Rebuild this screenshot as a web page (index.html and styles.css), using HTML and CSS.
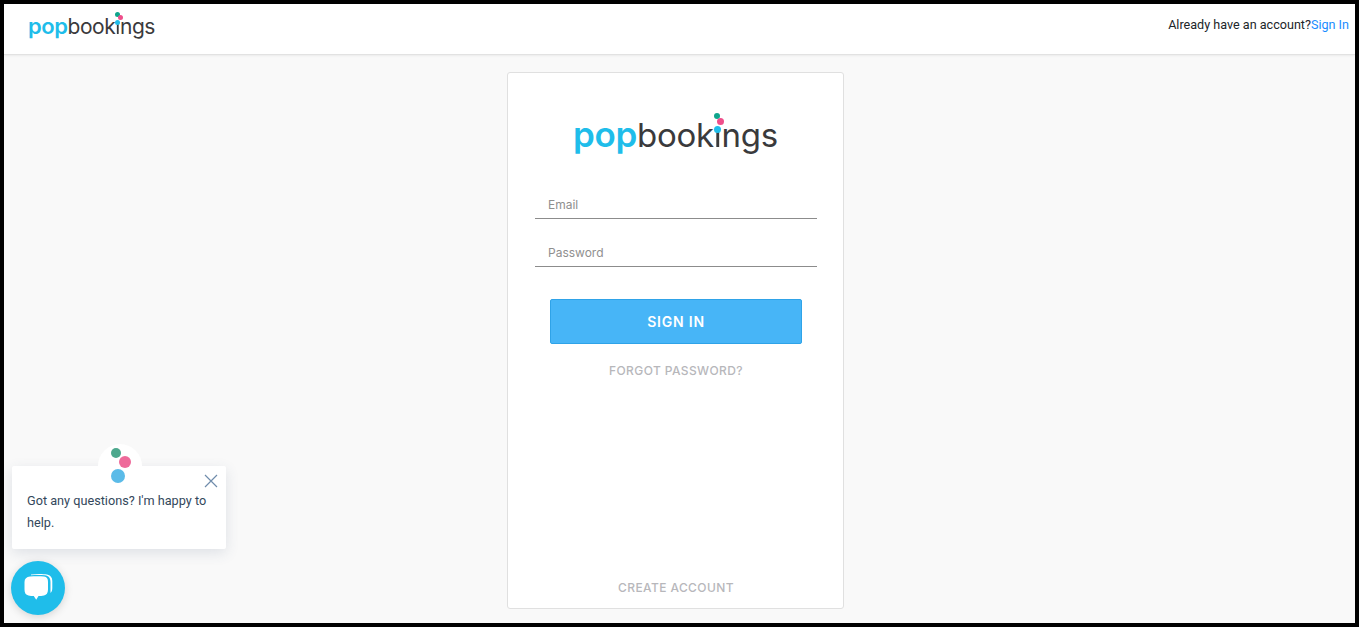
FILE: index.html
```html
<!DOCTYPE html>
<html lang="en">
<head>
  <meta charset="UTF-8" />
  <meta name="viewport" content="width=device-width, initial-scale=1.0"/>
  <title>Popbookings - Sign In</title>
  <link rel="stylesheet" href="styles.css">
</head>
<body>
  <div class="frame">
    <header class="topbar">
      <div class="logo logo-small">
        <span class="pop">pop</span>book<span class="no-dot">i</span>ngs
        <i class="dot dot-green"></i><i class="dot dot-pink"></i><i class="dot dot-blue"></i>
      </div>
      <div class="account">Already have an account?<a href="#">Sign In</a></div>
    </header>

    <main class="content">
      <div class="card">
        <div class="logo logo-large">
          <span class="pop">pop</span>book<span class="no-dot">i</span>ngs
          <i class="dot dot-green"></i><i class="dot dot-pink"></i><i class="dot dot-blue"></i>
        </div>

        <form class="form">
          <input class="field" type="text" placeholder="Email">
          <input class="field" type="password" placeholder="Password">
          <button class="submit" type="button">SIGN IN</button>
        </form>
        <a class="muted-link" href="#">FORGOT PASSWORD?</a>

        <a class="muted-link create" href="#">CREATE ACCOUNT</a>
      </div>
    </main>

    <!-- chat widget -->
    <div class="chat-bubble">
      <div class="chat-avatar">
        <i class="a-dot a-green"></i><i class="a-dot a-pink"></i><i class="a-dot a-blue"></i>
      </div>
      <svg class="chat-close" width="14" height="14" viewBox="0 0 14 14">
        <path d="M1 1 L13 13 M13 1 L1 13" stroke="#6f8cab" stroke-width="1.2" fill="none"/>
      </svg>
      <p>Got any questions? I'm happy to help.</p>
    </div>
    <div class="chat-launcher">
      <svg width="30" height="30" viewBox="0 0 30 30">
        <path d="M8 1.6 C13 .8 20 .8 24 1.6 C27.5 2.3 29.3 4.5 29.3 8 L29.3 15 C29.3 17 28.8 19 27.5 20 L27.5 9 C27.5 5 25.5 2.8 22 2.3 C18 1.8 12 1.8 8 2.3 Z" fill="#fff"/>
        <path d="M7 3.6 C12 3 17 3 21 3.6 C24 4 25 6 25 9 L25 16.5 C25 20 23.5 22 21 22.5 C19 23 17 23 15.5 23 L13.2 26.8 L10.8 23 C9 23 7 23 5.5 22.5 C2.8 22 1.5 20 1.5 16.5 L1.5 9 C1.5 6 3.5 4 7 3.6 Z" fill="#fff"/>
      </svg>
    </div>
  </div>
</body>
</html>
```

FILE: styles.css
```css
* {
  box-sizing: border-box;
}

body {
  margin: 0;
  font-family: 'Roboto', sans-serif;
  background: #000;
}

.frame {
  position: relative;
  height: 627px;
  border: 4px solid #000;
  background: #f9f9f9;
  display: flex;
  flex-direction: column;
  overflow: hidden;
}

.topbar {
  height: 51px;
  flex: none;
  background: #fff;
  border-bottom: 1px solid #e2e2e2;
  box-shadow: 0 1px 2px rgba(0,0,0,0.06);
  display: flex;
  align-items: flex-start;
  justify-content: space-between;
  padding: 13px 6px 0 24px;
}

.account {
  font-size: 12.6px;
  line-height: 15px;
  color: #212529;
}

.account a {
  color: #1a8cff;
  text-decoration: none;
}

/* logo */
.logo {
  position: relative;
  font-family: 'Inter', sans-serif;
  color: #3a3a3c;
  white-space: nowrap;
  line-height: 1;
}

.logo .pop {
  color: #1fbdea;
  font-weight: 600;
  line-height: 0;
}

/* the blue dot of the logo takes the place of the dot on the i */
.no-dot {
  color: transparent;
  background: linear-gradient(transparent 42%, #3a3a3c 42%);
  -webkit-background-clip: text;
  background-clip: text;
}

.dot {
  position: absolute;
  border-radius: 50%;
}

.dot-green { background: #0fa58c; }
.dot-pink { background: #ef4f8b; }
.dot-blue { background: #1fbdea; }

.logo-small {
  font-size: 21px;
  letter-spacing: -0.45px;
  margin-top: -1px;
}

.logo-small .pop {
  font-size: 22px;
}

.logo-small .dot { width: 5px; height: 5px; }
.logo-small .dot-green { left: 87px; top: -4px; }
.logo-small .dot-pink { left: 90px; top: -1px; }
.logo-small .dot-blue { left: 87px; top: 4px; }

.logo-large {
  font-size: 33px;
  letter-spacing: -0.3px;
  width: 206px;
  margin-top: 2px;
}

.logo-large .pop {
  font-size: 35px;
}

.logo-large .dot { width: 7px; height: 7px; }
.logo-large .dot-green { left: 141px; top: -6px; width: 6px; height: 6px; }
.logo-large .dot-pink { left: 144px; top: -1px; }
.logo-large .dot-blue { left: 141px; top: 7px; }

/* card */
.content {
  flex: 1;
  display: flex;
  justify-content: center;
  padding: 17px 8px 0 0;
}

.card {
  width: 337px;
  height: 537px;
  background: #fff;
  border: 1px solid #e0e0e0;
  border-radius: 3px;
  padding: 44px 26px 0 27px;
  display: flex;
  flex-direction: column;
  align-items: center;
  font-family: 'Inter', sans-serif;
}

.form {
  width: 100%;
  margin-top: 35px;
  display: flex;
  flex-direction: column;
  align-items: center;
}

.field {
  width: 100%;
  height: 32px;
  border: none;
  border-bottom: 1px solid #8c8c8c;
  padding: 4px 13px 0;
  margin-bottom: 16px;
  font-family: 'Inter', sans-serif;
  font-size: 12px;
  outline: none;
}

.field::placeholder {
  color: #8f8f8f;
  opacity: 1;
}

.submit {
  width: 252px;
  height: 45px;
  margin-top: 16px;
  background: #47b5f7;
  border: 1px solid #2fa3e8;
  border-radius: 2px;
  color: #fff;
  font-family: 'Inter', sans-serif;
  font-size: 14px;
  font-weight: 600;
  letter-spacing: 0.8px;
  cursor: pointer;
}

.muted-link {
  margin-top: 19px;
  color: #b7b7bb;
  font-size: 12px;
  font-weight: 500;
  letter-spacing: 0.4px;
  text-decoration: none;
}

.create {
  margin-top: auto;
  margin-bottom: 13px;
}

/* chat widget */
.chat-bubble {
  position: absolute;
  left: 8px;
  top: 462px;
  width: 214px;
  height: 83px;
  background: #fff;
  border-radius: 2px;
  box-shadow: 0 4px 14px rgba(60,80,110,0.14);
  padding: 24px 12px 0 15px;
}

.chat-bubble p {
  margin: 0;
  font-family: 'Roboto', sans-serif;
  font-size: 12.7px;
  line-height: 22px;
  color: #33475b;
}

.chat-avatar {
  position: absolute;
  left: 86px;
  top: -22px;
  width: 44px;
  height: 44px;
  border-radius: 50%;
  background: #fff;
}

.a-dot {
  position: absolute;
  border-radius: 50%;
}

.a-green { left: 13px; top: 4px; width: 10px; height: 10px; background: #4da88d; }
.a-pink { left: 21px; top: 12px; width: 12px; height: 12px; background: #ee6a9a; }
.a-blue { left: 13px; top: 25px; width: 14px; height: 14px; background: #5bbbe8; }

.chat-close {
  position: absolute;
  right: 8px;
  top: 8px;
}

.chat-launcher {
  position: absolute;
  left: 7px;
  top: 557px;
  width: 54px;
  height: 54px;
  border-radius: 50%;
  background: #1fbdea;
  box-shadow: 0 2px 8px rgba(0,0,0,0.15);
  display: flex;
  align-items: center;
  justify-content: center;
}
```
